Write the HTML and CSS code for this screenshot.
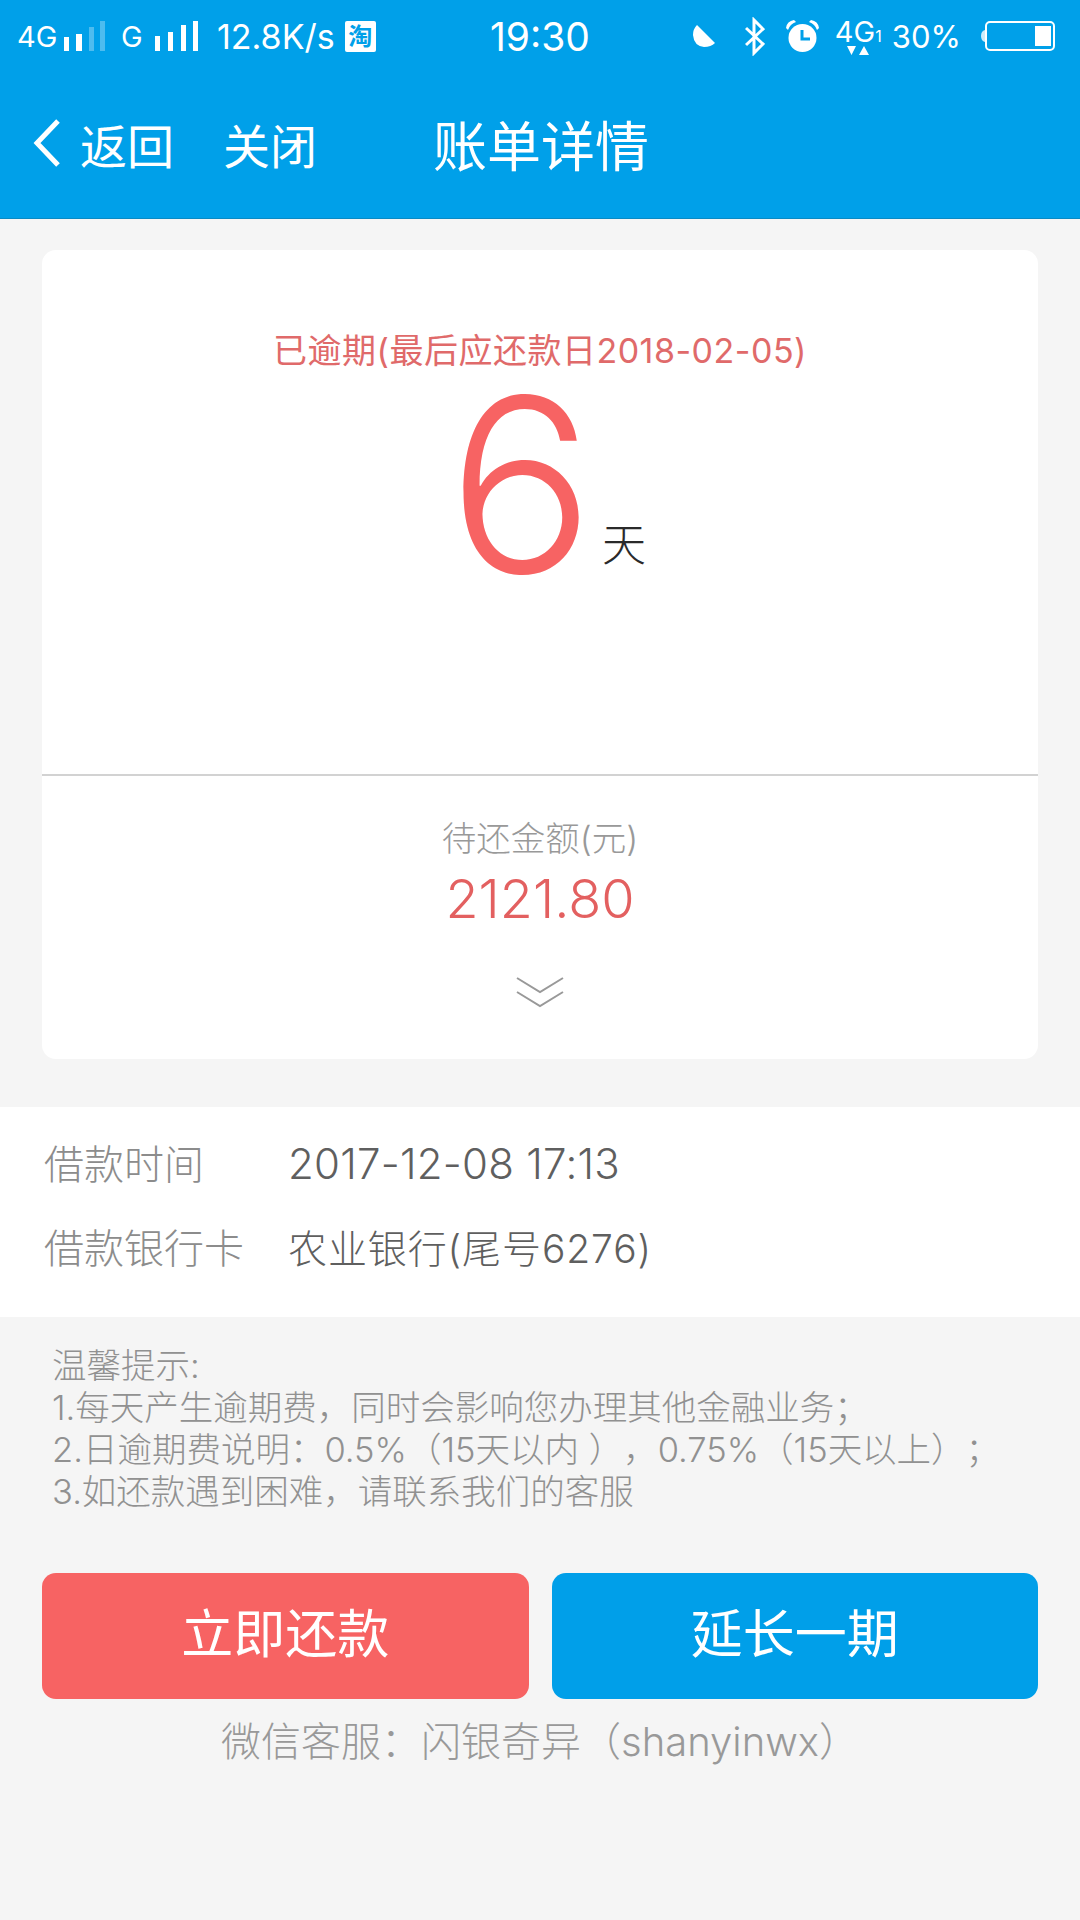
FILE: index.html
```html
<!DOCTYPE html>
<html lang="zh-CN">
<head>
    <meta charset="UTF-8">
    <meta name="viewport" content="width=device-width, initial-scale=1.0">
    <title>账单详情</title>
    <link rel="stylesheet" href="styles.css">
</head>
<body>
    <header class="topo">
        <div class="status">
            <div class="status-esq">
                <span class="rede">4G</span>
                <svg class="sinal" width="42" height="30" viewBox="0 0 42 30"><g fill="#fff"><rect x="0" y="16" width="5" height="14"/><rect x="12" y="13" width="6" height="17"/></g><g fill="#fff" opacity=".3"><rect x="25" y="6" width="5" height="24"/><rect x="36" y="0" width="5" height="30"/></g></svg>
                <span class="rede rede-g">G</span>
                <svg class="sinal" width="43" height="30" viewBox="0 0 43 30"><g fill="#fff"><rect x="0" y="15" width="5" height="15"/><rect x="13" y="11" width="5" height="19"/><rect x="26" y="4" width="5" height="26"/><rect x="38" y="0" width="5" height="30"/></g></svg>
                <span class="veloc">12.8K/s</span>
                <span class="taobao">淘</span>
            </div>
            <div class="hora">19:30</div>
            <div class="status-dir">
                <svg class="ic-lua" width="22" height="22" viewBox="0 0 22 22"><path d="M4 0 L22 18 Q18 22 11 22 Q1 21 0 10 Q0 4 4 0 Z" fill="#fff"/></svg>
                <svg class="ic-bt" width="20" height="39" viewBox="0 0 20 39"><path d="M1 11 L18 27 L9 36 L9 3 L18 12 L1 28" fill="none" stroke="#fff" stroke-width="3"/></svg>
                <svg class="ic-alarme" width="33" height="32" viewBox="0 0 33 32"><circle cx="16.500" cy="18" r="14" fill="#fff"/><path d="M16 10 V19 H24" fill="none" stroke="#00a0e9" stroke-width="3"/><path d="M0 8 Q1 1 8 0 L10 2 Q4 4 2 10 Z M33 8 Q32 1 25 0 L23 2 Q29 4 31 10 Z" fill="#fff"/></svg>
                <div class="rede-4g">
                    <span class="rede-4g-txt">4G<small>1</small></span>
                    <svg width="36" height="10" viewBox="0 0 36 10"><path d="M0 0 H9 L4.500 9 Z M12 9 H22 L17 0 Z" fill="#fff"/></svg>
                </div>
                <span class="pct">30%</span>
                <svg class="bateria" width="75" height="30" viewBox="0 0 75 30"><path d="M5 9 Q1 10 1 15 Q1 20 5 21 Z" fill="#fff" opacity=".8"/><rect x="6" y="1" width="68" height="28" rx="4" fill="none" stroke="#fff" stroke-width="2"/><rect x="55" y="5" width="16" height="20" fill="#fff"/></svg>
            </div>
        </div>
        <nav class="barra">
            <svg class="volta" width="30" height="50" viewBox="0 0 30 50"><path d="M26 3 L5 25 L26 47" fill="none" stroke="#fff" stroke-width="5"/></svg>
            <span class="barra-link">返回</span>
            <span class="barra-link fechar">关闭</span>
            <span class="barra-titulo">账单详情</span>
        </nav>
    </header>

    <main>
        <section class="cartao">
            <div class="cartao-topo">
                <p class="aviso">已逾期(最后应还款日2018-02-05)</p>
                <div class="dias"><span class="dias-num">6</span><span class="dias-un">天</span></div>
            </div>
            <div class="cartao-base">
                <p class="rotulo">待还金额(元)</p>
                <p class="valor">2121.80</p>
                <svg class="seta" width="48" height="32" viewBox="0 0 48 32"><path d="M1 1 L24 15 L47 1 M1 15 L24 29 L47 15" fill="none" stroke="#999" stroke-width="2"/></svg>
            </div>
        </section>

        <section class="info">
            <div class="linha"><span class="linha-nome">借款时间</span><span class="linha-valor linha-data">2017-12-08 17:13</span></div>
            <div class="linha"><span class="linha-nome">借款银行卡</span><span class="linha-valor">农业银行(尾号6276)</span></div>
        </section>

        <section class="dica">
            <p>温馨提示:</p>
            <p>1.每天产生逾期费，同时会影响您办理其他金融业务；</p>
            <p>2.日逾期费说明：0.5%（15天以内 ），0.75%（15天以上）；</p>
            <p>3.如还款遇到困难，请联系我们的客服</p>
        </section>

        <div class="botoes">
            <button class="botao botao-pagar">立即还款</button>
            <button class="botao botao-estender">延长一期</button>
        </div>
        <p class="wechat">微信客服：闪银奇异（shanyinwx）</p>
    </main>
</body>
</html>
```
FILE: styles.css
```css
* {
    box-sizing: border-box;
}

body {
    font-family: Inter, "Noto Sans CJK SC", sans-serif;
    font-weight: 300;
    text-spacing-trim: space-all;
    margin: 0;
    padding: 0;
    height: 1920px;
    background-color: #f5f5f5;
    overflow: hidden;
}

p {
    margin: 0;
}

.topo {
    height: 219px;
    background-color: #00a0e9;
    border-bottom: 1px solid #0a8ac4;
    color: white;
}

.status {
    height: 72px;
    padding: 0 25px 0 17px;
    display: flex;
    align-items: center;
    position: relative;
}

.status-esq,
.status-dir {
    display: flex;
    align-items: center;
}

.rede {
    font-size: 29px;
    font-weight: 400;
    width: 37px;
}

.rede-g {
    margin-left: 15px;
    width: 24px;
}

.sinal {
    margin-left: 10px;
}

.veloc {
    font-size: 34px;
    font-weight: 400;
    margin-left: 19px;
}

.taobao {
    width: 31px;
    height: 31px;
    margin-left: 10px;
    background-color: white;
    color: #00a0e9;
    font-size: 24px;
    font-weight: 700;
    line-height: 31px;
    text-align: center;
    border-radius: 2px;
}

.hora {
    font-size: 39px;
    font-weight: 400;
    position: absolute;
    left: 490px;
}

.status-dir {
    margin-left: auto;
}

.ic-bt {
    margin-left: 30px;
}

.ic-alarme {
    margin-left: 21px;
}

.rede-4g {
    display: flex;
    flex-direction: column;
    align-items: flex-start;
    line-height: 1;
    margin-left: 16px;
    width: 54px;
}

.rede-4g svg {
    margin-left: 12px;
}

.rede-4g-txt {
    font-size: 29px;
    font-weight: 400;
}

.rede-4g-txt small {
    font-size: 16px;
}

.pct {
    font-size: 31px;
    font-weight: 400;
    margin-left: 3px;
}

.bateria {
    margin-left: 19px;
}

.barra {
    height: 146px;
    padding: 0 0 4px 32px;
    display: flex;
    align-items: center;
    font-weight: 400;
}

.barra-link {
    font-size: 47px;
    margin-left: 18px;
}

.fechar {
    margin-left: 49px;
}

.barra-titulo {
    font-size: 54px;
    margin-left: 116px;
}

.cartao {
    margin: 31px 42px 0;
    height: 809px;
    background-color: white;
    border-radius: 14px;
    display: flex;
    flex-direction: column;
}

.cartao-topo {
    height: 526px;
    border-bottom: 2px solid #d2d2d2;
    padding-top: 80px;
    text-align: center;
}

.aviso {
    font-size: 34px;
    letter-spacing: .5px;
    font-weight: 400;
    color: #e06a6a;
    line-height: 42px;
}

.dias {
    display: flex;
    justify-content: center;
    align-items: flex-end;
    margin-top: 2px;
    margin-left: 14px;
}

.dias-num {
    font-weight: 350;
    font-size: 243px;
    line-height: 222px;
    color: #f76363;
}

.dias-un {
    font-size: 44px;
    color: #2a2a2a;
    margin-left: 8px;
    margin-bottom: 22px;
}

.cartao-base {
    text-align: center;
    padding-top: 35px;
}

.rotulo {
    font-size: 34.500px;
    color: #999;
}

.valor {
    font-size: 54px;
    font-weight: 350;
    color: #e36060;
    margin-top: 5px;
}

.seta {
    margin-top: 46px;
}

.info {
    margin-top: 48px;
    height: 210px;
    background-color: white;
    padding: 12px 44px;
}

.linha {
    display: flex;
    align-items: baseline;
    height: 84px;
    padding-top: 14px;
}

.linha-nome {
    width: 244px;
    font-size: 40px;
    color: #8c8c8c;
}

.linha-valor {
    font-size: 39px;
    letter-spacing: .9px;
    color: #5f5f5f;
}

.linha-data {
    font-size: 42px;
    letter-spacing: .25px;
}

.dica {
    padding: 28px 52px 0;
    font-size: 34.500px;
    line-height: 42px;
    color: #919191;
}

.botoes {
    display: flex;
    gap: 23px;
    margin: 60px 42px 0;
}

.botao {
    flex: 1;
    height: 126px;
    border: none;
    border-radius: 14px;
    padding: 0 0 12px;
    font-family: inherit;
    font-weight: 400;
    font-size: 52px;
    color: white;
}

.botao-pagar {
    background-color: #f76363;
}

.botao-estender {
    background-color: #009fe9;
}

.wechat {
    margin-top: 11px;
    text-align: center;
    font-size: 40px;
    color: #999;
}
```
